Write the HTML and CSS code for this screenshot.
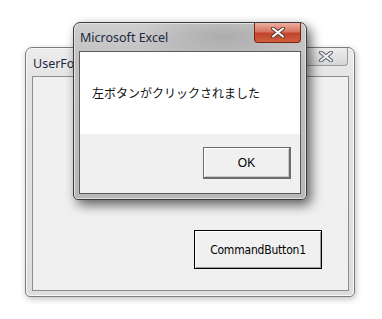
FILE: index.html
```html
<!doctype html>
<html>
    <head>
        <title>Microsoft Excel</title>
        <link rel="stylesheet" href="styles.css">
    </head>
<body>
    <div class="desk">
        <div class="win win-back">
            <div class="titlebar">
                <span class="title">UserForm1</span>
                <span class="close close-back">
                    <svg width="16" height="11" viewBox="0 0 16 11"><path d="M3 1.5 L13 9.5 M13 1.5 L3 9.5" stroke="#5a6070" stroke-width="4" stroke-linecap="round"/><path d="M3 1.5 L13 9.5 M13 1.5 L3 9.5" stroke="#f4f4f4" stroke-width="2" stroke-linecap="round"/></svg>
                </span>
            </div>
            <div class="client client-back">
                <div class="cmd">CommandButton1</div>
            </div>
        </div>

        <div class="win win-front">
            <div class="titlebar">
                <span class="title">Microsoft Excel</span>
                <span class="close close-front">
                    <svg width="16" height="11" viewBox="0 0 16 11"><path d="M3 1.5 L13 9.5 M13 1.5 L3 9.5" stroke="#5c3a36" stroke-width="4" stroke-linecap="round"/><path d="M3 1.5 L13 9.5 M13 1.5 L3 9.5" stroke="#ffffff" stroke-width="2" stroke-linecap="round"/></svg>
                </span>
            </div>
            <div class="client client-front">
                <div class="msg">左ボタンがクリックされました</div>
                <div class="btns">
                    <div class="ok">OK</div>
                </div>
            </div>
        </div>
    </div>
</body>
</html>
```
FILE: styles.css
```css
* { margin: 0; padding: 0; box-sizing: border-box; }
body { background: #fff; font: 12px "Noto Sans", "Noto Sans CJK JP", sans-serif; color: #000; }

.desk {
    position: relative;
    width: 382px;
    height: 319px;
    overflow: hidden;
}

.win {
    position: absolute;
    display: flex;
    flex-direction: column;
    border-radius: 7px 7px 5px 5px;
}

.titlebar {
    height: 28px;
    display: flex;
    align-items: flex-start;
    justify-content: space-between;
}

.title {
    line-height: 28px;
    color: #1c2840;
    font-size: 12.5px;
}

.close {
    display: flex;
    align-items: center;
    justify-content: center;
    border-radius: 0 0 4px 4px;
}

/* back window: UserForm */
.win-back {
    left: 25px;
    top: 47px;
    width: 330px;
    height: 250px;
    border: 1px solid #7c7c7c;
    background: linear-gradient(#ececec, #e2e2e2 40px, #dedede);
    padding: 0 5px 5px 6px;
    box-shadow: 1px 2px 6px rgba(0, 0, 0, 0.25), inset 0 0 0 1px #f8f8f8;
}

.win-back .title { padding: 2px 0 0 1px; }

.close-back {
    width: 45px;
    height: 18px;
    border: 1px solid #9a9a9a;
    border-top: none;
    background: linear-gradient(#eeeeee, #d6d6d6);
    margin-right: 1px;
}

.client {
    display: flex;
    flex-direction: column;
}

.client-back {
    flex: 1;
    border: 1px solid #8c8c8c;
    background: #f0f0f0;
    align-items: flex-end;
    justify-content: flex-end;
    padding: 0 26px 21px 0;
}

.cmd {
    width: 128px;
    height: 39px;
    border: 1px solid #000;
    background: #f0f0f0;
    box-shadow: inset 1px 1px 0 #fff, inset -1px -1px 0 #a0a0a0;
    display: flex;
    align-items: center;
    justify-content: center;
    font: 12px "DejaVu Sans Condensed", "Liberation Sans", sans-serif;
    letter-spacing: -0.2px;
    color: #000;
}

/* front window: message box */
.win-front {
    left: 73px;
    top: 22px;
    width: 234px;
    height: 178px;
    border: 1px solid #3c3c3c;
    background: radial-gradient(ellipse 90px 30px at 150px 14px, #acacac, rgba(172, 172, 172, 0)), linear-gradient(#cecece, #c0c0c0 40px, #b8b8b8);
    padding: 0 5px 5px 5px;
    box-shadow: 4px 5px 12px rgba(0, 0, 0, 0.6), inset 0 0 0 1px #e2e2e2;
}

.win-front .title { padding: 1px 0 0 1px; }

.close-front {
    width: 47px;
    height: 20px;
    border: 1px solid #7a2418;
    border-top: none;
    background: linear-gradient(#eeb0a2, #d87560 45%, #c3432c 55%, #d0603f);
}

.client-front {
    height: 143px;
    border: 1px solid #5a5a5a;
    background: #f0f0f0;
}

.msg {
    height: 82px;
    background: #fff;
    padding-left: 12px;
    font: 12px/82px "Noto Sans CJK JP", sans-serif;
    color: #111;
}

.btns {
    display: flex;
    justify-content: flex-end;
    padding: 13px 9px 0 0;
}

.ok {
    width: 88px;
    height: 32px;
    border: 1px solid #6c6c6c;
    border-right-width: 2px;
    border-bottom-width: 2px;
    background: #f0f0f0;
    box-shadow: inset 1px 1px 0 #fff, inset -1px -1px 0 #c8c8c8;
    display: flex;
    align-items: center;
    justify-content: center;
    font: 12px "Liberation Sans", sans-serif;
    color: #000;
}
```
